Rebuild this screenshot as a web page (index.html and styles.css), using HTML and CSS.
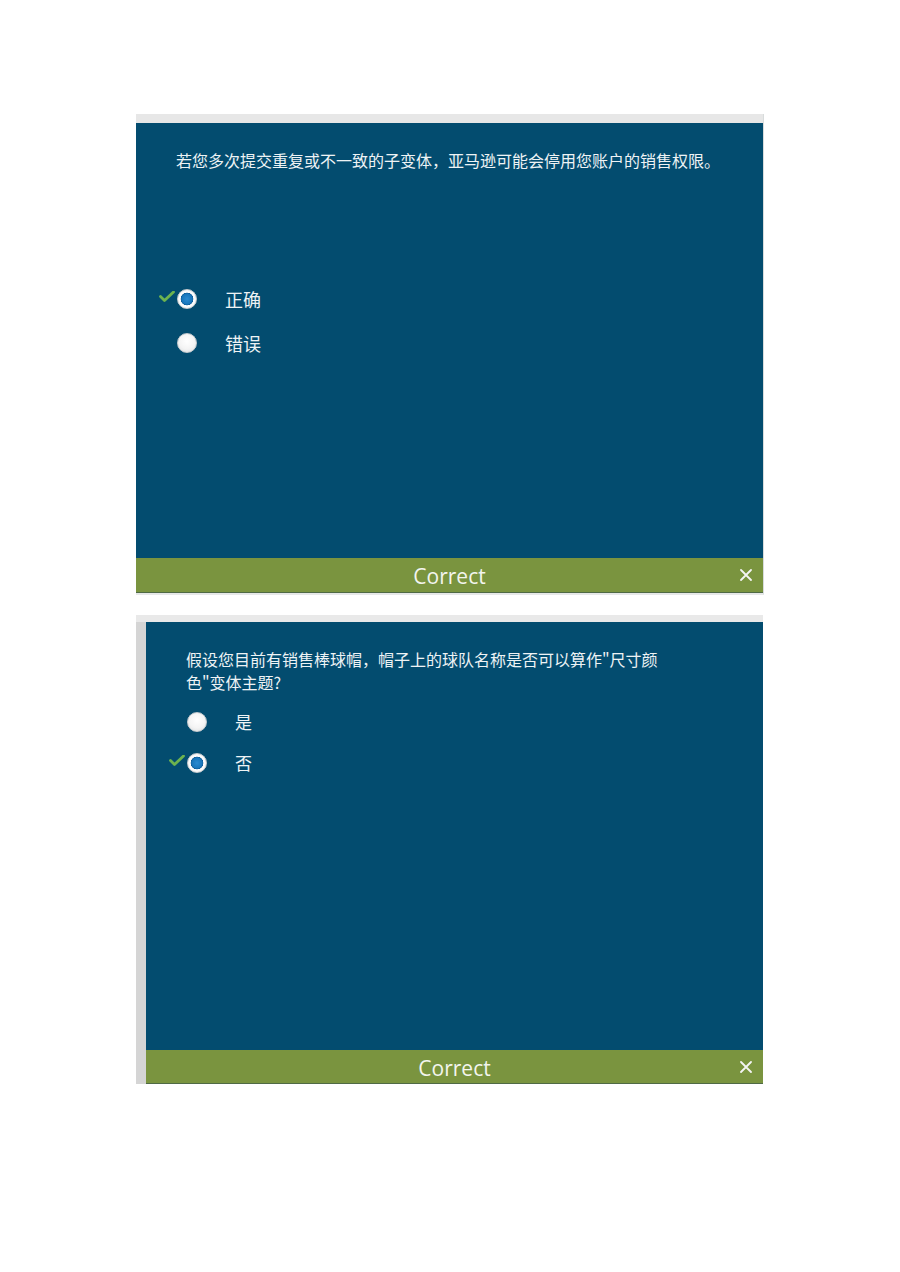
FILE: index.html
```html
<!DOCTYPE html>
<html lang="zh-CN">
<head>
<meta charset="utf-8">
<title>Quiz</title>
<link rel="stylesheet" href="styles.css">
</head>
<body>
<div class="page">
  <section class="panel panel-one">
    <div class="strip-top"></div>
    <div class="body">
      <p class="question">若您多次提交重复或不一致的子变体，亚马逊可能会停用您账户的销售权限。</p>
      <ul class="options options-one">
        <li class="option">
          <svg class="check" width="16" height="11" viewBox="0 0 16 11"><path d="M1.5 5.5 L5.5 9.5 L14.5 1" fill="none" stroke="#6db34f" stroke-width="2.8" stroke-linecap="round" stroke-linejoin="round"/></svg>
          <span class="radio selected"></span>
          <span class="label">正确</span>
        </li>
        <li class="option">
          <span class="radio"></span>
          <span class="label">错误</span>
        </li>
      </ul>
    </div>
    <div class="feedback">
      <span class="feedback-text">Correct</span>
      <svg class="close" width="12" height="12" viewBox="0 0 12 12"><path d="M1 1 L11 11 M11 1 L1 11" stroke="#f4f4f4" stroke-width="1.8" stroke-linecap="round"/></svg>
    </div>
  </section>

  <section class="panel panel-two">
    <div class="strip-top"></div>
    <div class="inner">
      <div class="strip-left"></div>
      <div class="main">
        <div class="body body-two">
          <p class="question question-two">假设您目前有销售棒球帽，帽子上的球队名称是否可以算作"尺寸颜色"变体主题?</p>
          <ul class="options options-two">
            <li class="option">
              <span class="radio"></span>
              <span class="label">是</span>
            </li>
            <li class="option">
              <svg class="check" width="16" height="11" viewBox="0 0 16 11"><path d="M1.5 5.5 L5.5 9.5 L14.5 1" fill="none" stroke="#6db34f" stroke-width="2.8" stroke-linecap="round" stroke-linejoin="round"/></svg>
              <span class="radio selected"></span>
              <span class="label">否</span>
            </li>
          </ul>
        </div>
        <div class="feedback feedback-two">
          <span class="feedback-text">Correct</span>
          <svg class="close" width="12" height="12" viewBox="0 0 12 12"><path d="M1 1 L11 11 M11 1 L1 11" stroke="#f4f4f4" stroke-width="1.8" stroke-linecap="round"/></svg>
        </div>
      </div>
    </div>
  </section>
</div>
</body>
</html>
```

FILE: styles.css
```css
html, body {
  margin: 0;
  padding: 0;
  background: #ffffff;
}

.page {
  width: 900px;
  height: 1272px;
  padding: 114px 0 0 136px;
  box-sizing: border-box;
  font-family: "Noto Sans CJK SC", "Noto Sans", sans-serif;
}

.panel {
  display: flex;
  flex-direction: column;
}

.panel-one {
  border-right: 1px solid #d8dcdc;
  width: 627px;
  border-bottom: 2px solid #e6e8e8;
}

.strip-top {
  height: 9px;
  background: #e7e7e7;
}

.panel-two {
  margin-top: 20px;
  width: 627px;
}

.panel-two .strip-top {
  height: 7px;
  background: #e9e9e9;
}

.inner {
  display: flex;
}

.strip-left {
  width: 10px;
  background: #d5d5d5;
  flex: none;
}

.main {
  flex: 1;
  display: flex;
  flex-direction: column;
}

.body {
  background: #034c6f;
  height: 435px;
  box-sizing: border-box;
  padding: 26px 0 0 40px;
}

.body-two {
  height: 428px;
}

.question {
  margin: 0;
  color: #eef3f5;
  font-size: 16px;
  line-height: 23px;
}

.question-two {
  width: 476px;
}

.options {
  list-style: none;
  margin: 0;
  padding: 0;
}

.options-one {
  margin-top: 105px;
}

.options-two {
  margin-top: 7px;
}

.option {
  position: relative;
  display: flex;
  align-items: center;
  height: 44px;
  padding-left: 1px;
}

.options-two .option {
  height: 41px;
}

.check {
  position: absolute;
  left: -17px;
  top: 50%;
  margin-top: -8px;
}

.radio {
  width: 20px;
  height: 20px;
  border-radius: 50%;
  box-sizing: border-box;
  border: 1px solid #c9cdd0;
  background: radial-gradient(circle at 50% 40%, #ffffff 0%, #f4f4f4 55%, #d9dcde 100%);
  flex: none;
}

.radio.selected {
  background: radial-gradient(circle at 50% 50%, #2a8ad0 0%, #1976bb 40%, #0f5d98 48%, #ffffff 52%, #f2f2f2 80%, #d6d9db 100%);
}

.label {
  margin-left: 28px;
  color: #eef3f5;
  font-size: 18px;
  line-height: 24px;
}

.options-two .label {
  font-size: 17px;
}

.feedback {
  position: relative;
  height: 34px;
  background: #7a943f;
  border-bottom: 1px solid #4f6a45;
  display: flex;
  align-items: center;
  justify-content: center;
}

.feedback-two {
  height: 33px;
}

.feedback-text {
  font-family: "Open Sans", "Noto Sans", sans-serif;
  color: #f3f5ee;
  font-size: 21px;
  line-height: 24px;
  padding-top: 2px;
}

.close {
  position: absolute;
  right: 11px;
  top: 50%;
  margin-top: -6px;
}
```
